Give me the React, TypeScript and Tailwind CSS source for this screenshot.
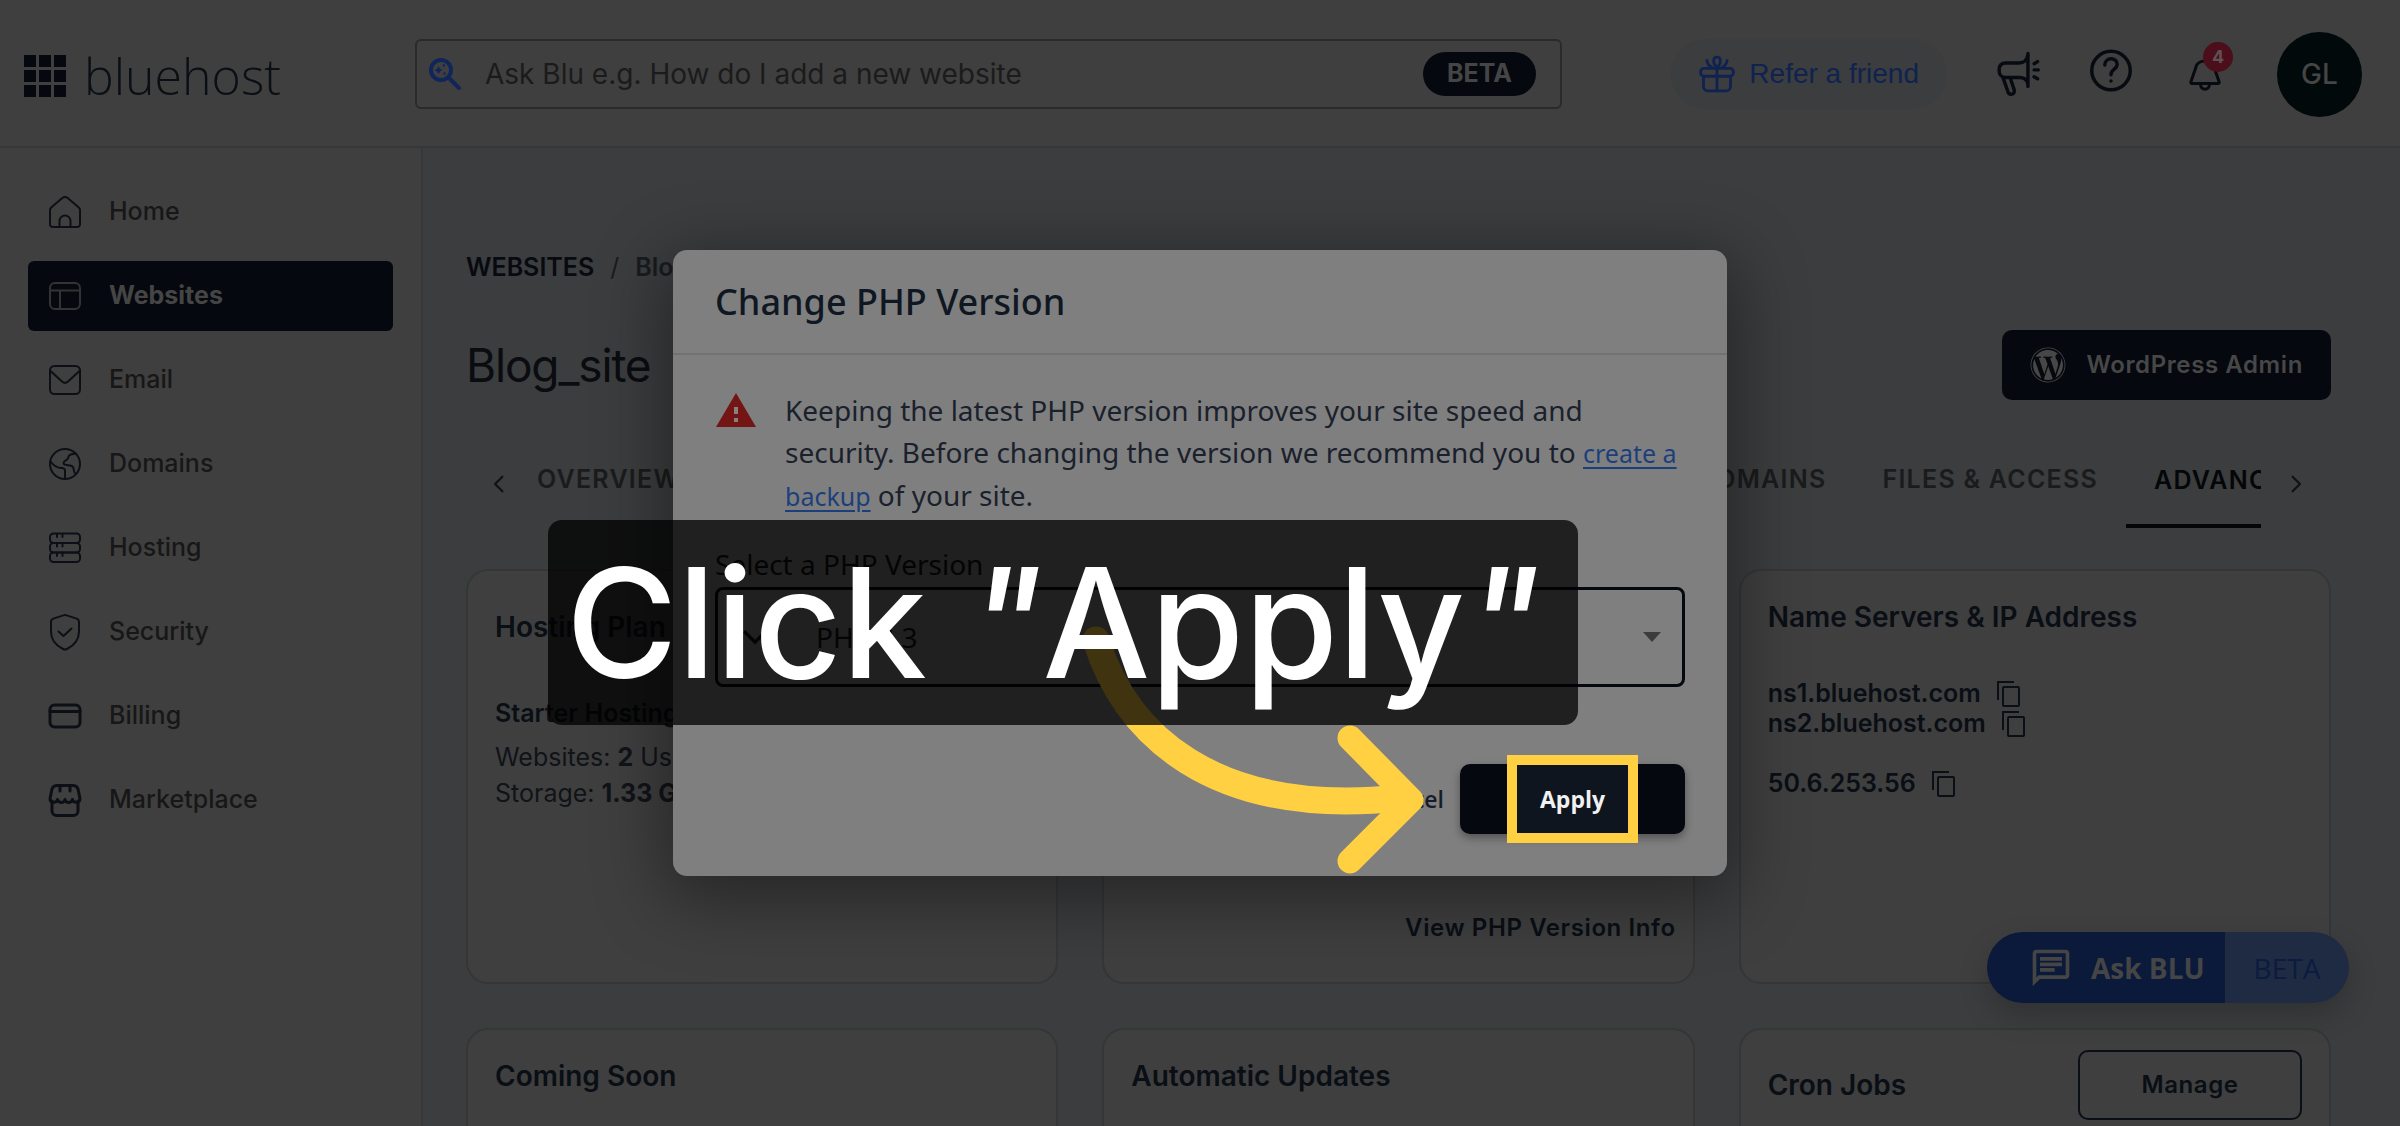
import type { ReactNode } from "react";
import { FaWordpress } from "react-icons/fa";
import { MdOutlineChat } from "react-icons/md";

interface IconProps {
  children: ReactNode;
  size?: string;
  strokeWidth?: number;
}

// 32-unit grid line icon
function Icon({ children, size = "size-8", strokeWidth = 2 }: IconProps) {
  return (
    <svg
      viewBox="0 0 32 32"
      className={`${size} shrink-0 overflow-visible`}
      fill="none"
      stroke="currentColor"
      strokeWidth={strokeWidth}
      strokeLinecap="round"
      strokeLinejoin="round"
      aria-hidden="true"
    >
      {children}
    </svg>
  );
}

const NAV_ITEMS: Array<{ label: string; icon: ReactNode; active?: boolean }> = [
  {
    label: "Home",
    icon: (
      <Icon>
        <path d="M1 14a3 3 0 0 1 1.2-2.4L13 2.2a5 5 0 0 1 6 0l10.800 9.400A3 3 0 0 1 31 14v14.500a2.500 2.500 0 0 1-2.500 2.500h-25A2.500 2.500 0 0 1 1 28.500z" />
        <path d="M10.500 31v-6a5.500 5.500 0 0 1 11 0v6" />
      </Icon>
    ),
  },
  {
    label: "Websites",
    active: true,
    icon: (
      <Icon>
        <rect x="1" y="3" width="30" height="26" rx="5" />
        <path d="M1 10.500h30M11 10.500V29" />
      </Icon>
    ),
  },
  {
    label: "Email",
    icon: (
      <Icon>
        <rect x="1" y="2" width="30" height="28" rx="4.500" />
        <path d="M1.500 7l11.500 10.500a4.500 4.500 0 0 0 6 0L30.500 7" />
      </Icon>
    ),
  },
  {
    label: "Domains",
    icon: (
      <Icon>
        <circle cx="16" cy="16" r="15" />
        <path d="M1.500 13.500c3 4 6 6.500 11 6.500 3 0 4 1.500 3.500 4V31" />
        <path d="M26.500 5.500c-3 .5-7 .5-7 3.500 0 3.500-5 3-5 6 0 3.500 8 1 9.500 4s0 5.500 3 7" />
      </Icon>
    ),
  },
  {
    label: "Hosting",
    icon: (
      <Icon>
        <rect x="1" y="1.500" width="30" height="9.500" rx="3.500" />
        <rect x="1" y="11" width="30" height="9.500" rx="3.500" />
        <rect x="1" y="20.500" width="30" height="9.500" rx="3.500" />
        <path d="M8 2v3M13.500 2v3M8 11.500v3M13.500 11.500v3M8 21v3M13.500 21v3" />
      </Icon>
    ),
  },
  {
    label: "Security",
    icon: (
      <Icon>
        <path d="M14.300-.6a5 5 0 0 1 3.400 0l10 3.200A3.500 3.500 0 0 1 30 6v9.500c0 9-5 14-12 17.500a4.500 4.500 0 0 1-4 0C7 29.500 2 24.500 2 15.500V6a3.500 3.500 0 0 1 2.300-3.400z" />
        <path d="M9.500 15.500l5 4.500 8-7.500" />
      </Icon>
    ),
  },
  {
    label: "Billing",
    icon: (
      <Icon strokeWidth={3}>
        <rect x="1" y="5" width="30" height="22" rx="4.500" />
        <path d="M1 11.500h30" />
      </Icon>
    ),
  },
  {
    label: "Marketplace",
    icon: (
      <Icon strokeWidth={3}>
        <path d="M3 17v10a4.500 4.500 0 0 0 4.500 4.500h17A4.500 4.500 0 0 0 29 27V17" />
        <path d="M1 14.500L3 5a5 5 0 0 1 4.500-3.500h17A5 5 0 0 1 29 5l2 9.500c0 4.500-6.500 5-7.500 1-1.500 4-6.500 4-7.500 0-1 4-6 4-7.500 0-1 4-7.500 3.500-7.500-1z" />
        <path d="M11 2v5M21 2v5" />
      </Icon>
    ),
  },
];

function CopyIcon() {
  return (
    <svg viewBox="0 0 23 26" className="h-[26px] w-[23px]" fill="none" stroke="currentColor" strokeWidth="2" aria-hidden="true">
      <path d="M1 19V1h16" />
      <rect x="6" y="6" width="16" height="19" rx="1" />
    </svg>
  );
}

function CopyRow({ value }: { value: string }) {
  return (
    <div className="flex h-[30px] items-center gap-4 text-[25px] font-semibold">
      <span>{value}</span>
      <button type="button" aria-label={`Copy ${value}`}>
        <CopyIcon />
      </button>
    </div>
  );
}

function Card({ children }: { children: ReactNode }) {
  return (
    <section className="flex flex-col rounded-[22px] border-2 border-[#353636] bg-[#3f3f3f] px-[27px]">
      {children}
    </section>
  );
}

function Header() {
  return (
    <header className="flex h-[148px] shrink-0 items-center border-b-2 border-[#363738] pt-0.5 pr-[38px] pl-6">
      <a href="#home" className="flex w-[391px] shrink-0 items-center gap-[18px] pt-1" aria-label="bluehost">
        <svg viewBox="0 0 42 42" className="size-[42px]" fill="#05090f" aria-hidden="true">
          {[0, 15, 30].map((y) => [0, 15, 30].map((x) => <rect key={`${x}-${y}`} x={x} y={y} width="12" height="12" />))}
        </svg>
        <span className="font-['Open_Sans'] text-[50px] leading-[60px] font-light text-[#0a0f16]">bluehost</span>
      </a>

      <label className="flex h-[70px] w-[1147px] min-w-0 shrink items-center rounded-md border-2 border-[#2a2a2a] pr-6 pl-3">
        <span className="text-[#10255a]">
          <Icon strokeWidth={4}>
            <circle cx="12" cy="12" r="10" />
            <path d="M19.500 19.500L30 30" />
            <path d="M9.500 9l1 2.200 2.200 1-2.200 1-1 2.200-1-2.200-2.200-1 2.200-1z" fill="currentColor" strokeWidth="1" />
            <path d="M15 7.500v.1M15.500 15.500v.1" strokeWidth="2.500" />
          </Icon>
        </span>
        <input
          type="text"
          aria-label="Ask Blu"
          placeholder="Ask Blu e.g. How do I add a new website"
          className="ml-6 min-w-0 flex-1 bg-transparent text-[28px] text-[#1b1b1b] outline-none placeholder:text-[#1b1b1b] placeholder:opacity-100"
        />
        <span className="flex h-11 w-[113px] items-center justify-center rounded-full bg-[#05090f] text-[25px] font-bold text-[#454545]">
          BETA
        </span>
      </label>

      <div className="ml-auto flex shrink-0 items-center text-[#070b11]">
        <a
          href="#refer"
          className="flex h-[70px] items-center gap-3.5 rounded-full bg-[#3b3d3f] px-7 font-['Liberation_Sans'] text-[28px] text-[#10224f]"
        >
          <Icon size="size-9" strokeWidth={2.500}>
            <rect x="1.500" y="11" width="29" height="7" rx="3" />
            <path d="M4 18v9a4 4 0 0 0 4 4h16a4 4 0 0 0 4-4v-9M16 11v20M16 10c-4-3-4-9 0-9s4 6 0 9zM11.500 10C9 9 7.500 7 7 4M20.500 10c2.500-1 4-3 4.500-6" />
          </Icon>
          Refer a friend
        </a>
        <button type="button" aria-label="Announcements" className="ml-[50px]">
          <Icon size="size-[44px]" strokeWidth={2.500}>
            <path d="M22.500 1v24M22.500 2c-.5 3.500-3 6-6.500 6H6.500C3 8 1.500 10 1.500 13s1.500 5.500 4.500 5.500h10c3.500 0 6 1.500 6.500 5" />
            <path d="M4.500 19l3.300 9.500c1 3.500 5.500 2.500 4.700-1L10 20" />
            <path d="M27 8.500l2.500-1.500M27 13h3M27 18l2.500 1.500" />
          </Icon>
        </button>
        <button type="button" aria-label="Help" className="ml-12">
          <Icon size="size-[44px]" strokeWidth={2.500}>
            <circle cx="16" cy="13.500" r="14" />
            <path d="M11.500 9.500c0-6 9-6 9-.5 0 3.500-4.500 3.500-4.500 7.500M16 21v.1" />
          </Icon>
        </button>
        <button type="button" aria-label="Notifications, 4 unread" className="relative ml-[56px]">
          <Icon size="size-8" strokeWidth={3}>
            <path d="M7 9c1.500-8 16.500-8 18 0l5 14.500c.5 1.500 0 2-1 2H3c-1 0-1.500-.5-1-2z" />
            <path d="M11.500 26c0 7 9 7 9 0" />
          </Icon>
          <span className="absolute -top-4 left-3.5 flex size-[30px] items-center justify-center rounded-full bg-[#4c0e1b] text-lg font-bold text-[#5f5055]">
            4
          </span>
        </button>
        <button
          type="button"
          className="ml-[56px] flex size-[85px] items-center justify-center rounded-full bg-[#02090b] text-[28px] font-medium text-[#454545]"
        >
          GL
        </button>
      </div>
    </header>
  );
}

function Sidebar() {
  return (
    <nav className="flex w-[423px] shrink-0 flex-col gap-3.5 border-r-2 border-[#383838] px-7 pt-[29px]">
      {NAV_ITEMS.map((item) => (
        <a
          key={item.label}
          href={`#${item.label.toLowerCase()}`}
          className={`flex h-[70px] items-center gap-7 rounded-md pl-[21px] text-[25px] ${
            item.active ? "bg-[#05090f] font-bold text-[#454545]" : "font-medium text-[#171717]"
          }`}
        >
          <span className={item.active ? "text-[#333333]" : "text-[#0c1016]"}>{item.icon}</span>
          {item.label}
        </a>
      ))}
    </nav>
  );
}

function Tabs() {
  return (
    <div className="mt-12 flex h-20 items-start text-[#101215]">
      <button type="button" aria-label="Previous tabs" className="flex h-[72px] w-[43px] shrink-0 items-center pl-6">
        <Icon size="size-[18px]" strokeWidth={4}>
          <path d="M22 3L9 16l13 13" />
        </Icon>
      </button>
      <div className="flex min-w-0 flex-1 overflow-hidden text-[25px] font-semibold tracking-wider whitespace-nowrap text-[#1a1b1c]">
        <a href="#overview" className="flex h-16 items-center px-7">OVERVIEW</a>
        <a href="#domains" className="ml-auto flex h-16 items-center px-7">DOMAINS</a>
        <a href="#files" className="flex h-16 items-center px-7">FILES &amp; ACCESS</a>
        <a
          href="#advanced"
          className="flex h-20 w-[135px] items-start overflow-hidden border-b-4 border-[#050607] pt-3.5 pl-7 text-[#050607]"
        >
          ADVANCED
        </a>
      </div>
      <button type="button" aria-label="Next tabs" className="flex h-[72px] w-[70px] shrink-0 items-center pl-[26px]">
        <Icon size="size-[18px]" strokeWidth={4}>
          <path d="M10 3l13 13-13 13" />
        </Icon>
      </button>
    </div>
  );
}

function Dashboard() {
  return (
    <main className="min-w-0 flex-1 bg-[#3b3d3e] pr-[69px] pl-[43px] text-[#0a0e15]">
      <div className="mt-[104px] flex h-8 items-center gap-4 text-[25px] font-semibold">
        <a href="#websites" className="text-[#070a10]">WEBSITES</a>
        <span className="font-normal text-[#1a1b1c]">/</span>
        <span className="text-[#191b1f]">Blog_site</span>
      </div>

      <div className="mt-[46px] flex h-[70px] items-center justify-between">
        <h1 className="text-[46px] tracking-tight text-[#0a0c10]">Blog_site</h1>
        <button
          type="button"
          className="flex h-[70px] items-center gap-5 rounded-[10px] bg-[#05080e] px-7 text-2xl font-semibold tracking-wide text-[#474747]"
        >
          <FaWordpress className="size-9" />
          WordPress Admin
        </button>
      </div>

      <Tabs />

      <div className="mt-[41px] grid grid-cols-3 gap-x-11 gap-y-11">
        <Card>
          <h2 className="mt-10 text-[28px] leading-8 font-semibold">Hosting Plan</h2>
          <p className="mt-[52px] text-[25px] leading-9 font-semibold">Starter Hosting</p>
          <p className="mt-2 text-[25px] leading-9 text-[#101318]">
            Websites: <b>2</b> Used
            <br />
            Storage: <b>1.33 GB</b>
          </p>
        </Card>
        <Card>
          <h2 className="mt-7 text-[28px] leading-8 font-semibold">PHP Version</h2>
          <a href="#php" className="mt-auto mr-[-10px] mb-9 self-end text-2xl leading-9 font-semibold tracking-wide">
            View PHP Version Info
          </a>
        </Card>
        <Card>
          <h2 className="mt-[30px] text-[28px] leading-8 font-semibold">Name Servers &amp; IP Address</h2>
          <div className="mt-[46px]">
            <CopyRow value="ns1.bluehost.com" />
            <CopyRow value="ns2.bluehost.com" />
          </div>
          <div className="mt-[30px] mb-[183px]">
            <CopyRow value="50.6.253.56" />
          </div>
        </Card>
        <Card>
          <h2 className="mt-[30px] mb-28 text-[28px] leading-8 font-semibold">Coming Soon</h2>
        </Card>
        <Card>
          <h2 className="mt-[30px] text-[28px] leading-8 font-semibold">Automatic Updates</h2>
        </Card>
        <Card>
          <div className="mt-5 flex items-center justify-between">
            <h2 className="text-[28px] leading-8 font-semibold">Cron Jobs</h2>
            <button
              type="button"
              className="h-[70px] w-56 rounded-[10px] border-2 border-[#0a0e16] text-2xl font-semibold tracking-wide"
            >
              Manage
            </button>
          </div>
        </Card>
      </div>
    </main>
  );
}

function AskBlu() {
  return (
    <button
      type="button"
      className="absolute right-[51px] bottom-[123px] flex h-[71px] overflow-hidden rounded-full font-['Open_Sans'] text-[28px] shadow-[0_12px_30px_rgba(0,0,0,0.2)]"
    >
      <span className="flex h-full w-[238px] items-center gap-[18px] bg-[#0b1a3a] pl-[42px] font-bold text-[#454545]">
        <MdOutlineChat className="size-11" />
        Ask BLU
      </span>
      <span className="flex h-full w-[124px] items-center justify-center bg-[#1f2a43] font-medium text-[#0c1b40]">BETA</span>
    </button>
  );
}

function PhpDialog() {
  return (
    <div
      role="dialog"
      aria-modal="true"
      aria-labelledby="php-title"
      className="relative h-[626px] w-[1054px] rounded-[14px] bg-[#7f7f7f] font-['Noto_Sans'] text-[#1a212c] shadow-[0_16px_70px_8px_rgba(0,0,0,0.4)]"
    >
      <h2 id="php-title" className="flex h-[105px] items-center border-b-2 border-[#727272] px-[42px] text-[36px] font-medium text-[#0f1722]">
        Change PHP Version
      </h2>

      <div className="px-[42px] pt-[34px]">
        <div className="flex items-start gap-7">
          <svg viewBox="0 0 40 34" className="mt-1 h-[34px] w-[42px] shrink-0" aria-hidden="true">
            <path d="M20 0l20 34H0z" fill="#731515" />
            <path d="M20 14v7M20 25v4" stroke="#8a8080" strokeWidth="4" />
          </svg>
          <p className="text-[28px] leading-[42px]">
            Keeping the latest PHP version improves your site speed and security. Before changing the version we recommend you to{" "}
            <a href="#backup" className="text-[25px] text-[#1c3f7c] underline underline-offset-4">create a backup</a> of your site.
          </p>
        </div>

        <label htmlFor="php-version" className="mt-[26px] block text-[28px] leading-[42px] text-[#111]">
          Select a PHP Version
        </label>
        <div className="relative mt-0.5 flex items-center">
          <select
            id="php-version"
            className="h-[100px] w-full appearance-none rounded-lg border-[3px] border-[#05080e] bg-transparent pl-[98px] text-[28px] text-[#111]"
          >
            <option>PHP 8.3</option>
          </select>
          <svg viewBox="0 0 22 14" className="pointer-events-none absolute left-7 w-6" fill="none" stroke="#111" strokeWidth="3" aria-hidden="true">
            <path d="M1 2l10 10L21 2" />
          </svg>
          <svg viewBox="0 0 18 10" className="pointer-events-none absolute right-6 w-[18px]" aria-hidden="true">
            <path d="M0 0h18l-9 10z" fill="#3c3c3c" />
          </svg>
        </div>

        <div className="mt-[77px] flex h-[70px] items-center justify-end gap-4 font-['Open_Sans'] text-[23px]">
          <button type="button" className="font-semibold text-[#161d29]">Cancel</button>
          <button
            type="button"
            className="relative h-[70px] w-[225px] rounded-[10px] bg-[#05080e] font-bold text-[#f1f1f1] shadow-[0_4px_8px_rgba(0,0,0,0.35)]"
          >
            <span className="absolute inset-x-[47px] -inset-y-[9px] flex items-center justify-center border-10 border-[#ffd042] bg-[#0e151f]">
              Apply
            </span>
          </button>
        </div>
      </div>

      {/* Arrow from the caption to the Apply button */}
      <svg
        viewBox="0 0 360 260"
        className="pointer-events-none absolute top-[370px] left-[407px] w-[360px]"
        fill="none"
        stroke="#ffd042"
        strokeLinecap="round"
        strokeLinejoin="round"
        aria-hidden="true"
      >
        <path d="M16 20C45 112 130 198 320 178" strokeWidth="27" />
        <path d="M270 118l61 62-61 61" strokeWidth="25" />
      </svg>

      {/* Caption */}
      <p className="absolute top-[270px] -left-[125px] flex h-[205px] w-[1030px] items-center rounded-[14px] bg-black/75 pl-[18px] font-['Inter'] text-[152px] leading-none font-medium whitespace-pre text-white">
        Click <i>"</i>Apply<i>"</i>
      </p>
    </div>
  );
}

export default function App() {
  return (
    <div className="relative flex h-screen flex-col overflow-hidden bg-[#3f3f3f] font-['Inter',sans-serif]">
      <Header />
      <div className="flex min-h-0 flex-1">
        <Sidebar />
        <Dashboard />
      </div>
      <AskBlu />
      <div className="absolute inset-0 flex items-start justify-center pt-[250px]">
        <PhpDialog />
      </div>
    </div>
  );
}
